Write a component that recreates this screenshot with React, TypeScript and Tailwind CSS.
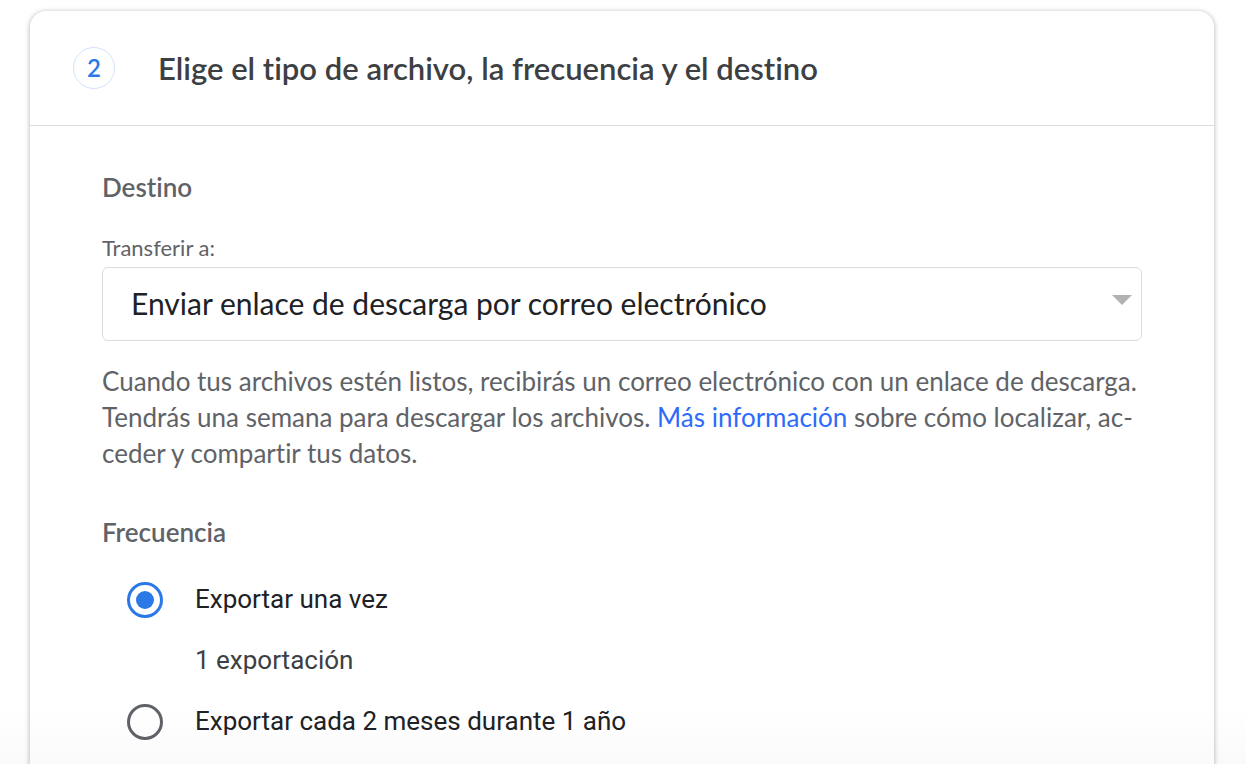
import { useState } from "react";

const frequencies = [
  { id: "once", label: "Exportar una vez", detail: "1 exportación" },
  { id: "recurring", label: "Exportar cada 2 meses durante 1 año", detail: "" },
];

function StepHeader() {
  return (
    <header className="flex h-[115px] items-center gap-[43px] border-b border-[#dadce0] px-[43px]">
      <span className="flex size-[42px] shrink-0 items-center justify-center rounded-full border border-[#d2e3fc] text-2xl font-semibold text-[#2a79e6]">
        2
      </span>
      <h2 className="text-[31px] leading-9 font-semibold text-[#3c4043]">
        Elige el tipo de archivo, la frecuencia y el destino
      </h2>
    </header>
  );
}

function Destination() {
  return (
    <section>
      <h3 className="text-[26px] leading-8 font-semibold">Destino</h3>
      <label htmlFor="transfer" className="mt-[29px] block text-[22px] leading-8">
        Transferir a:
      </label>
      <div className="relative mt-[3px]">
        <select
          id="transfer"
          className="block h-[74px] w-full appearance-none rounded-md border border-[#dadce0] bg-white pr-12 pb-0.5 pl-7 text-[30px] text-[#202124]"
        >
          <option>Enviar enlace de descarga por correo electrónico</option>
        </select>
        <svg
          aria-hidden="true"
          viewBox="0 0 20 10"
          className="pointer-events-none absolute top-7 right-[10px] h-[10px] w-5 fill-[#b2b2b2]"
        >
          <path d="M0 0h20L10 10z" />
        </svg>
      </div>
      <p className="mt-[22px] text-[26px] leading-9">
        Cuando tus archivos estén listos, recibirás un correo electrónico con un enlace de descarga.
        Tendrás una semana para descargar los archivos.{" "}
        <a href="#informacion" className="text-[#2f6bfa]">
          Más información
        </a>{" "}
        sobre cómo localizar, ac&shy;ceder y compartir tus datos.
      </p>
    </section>
  );
}

function Frequency() {
  const [selected, setSelected] = useState("once");
  return (
    <fieldset className="mt-[45px]">
      <legend className="text-[26px] leading-8 font-semibold">Frecuencia</legend>
      <div className="mt-[21px] pl-[25px] font-['Roboto',sans-serif] text-[26px] text-[#202124]">
        {frequencies.map((option) => (
          <div key={option.id}>
            <label htmlFor={option.id} className="flex h-[61px] items-center gap-8">
              <span className="grid size-9 shrink-0 place-items-center">
                <input
                  id={option.id}
                  type="radio"
                  name="frequency"
                  checked={selected === option.id}
                  onChange={() => setSelected(option.id)}
                  className="peer col-start-1 row-start-1 size-9 appearance-none rounded-full border-3 border-[#5f6368] checked:border-[#2a79e6]"
                />
                <span className="pointer-events-none col-start-1 row-start-1 size-[18px] rounded-full peer-checked:bg-[#2a79e6]" />
              </span>
              {option.label}
            </label>
            {option.detail && (
              <p className="flex h-[61px] items-center pl-[68px] text-[#3c4043]">{option.detail}</p>
            )}
          </div>
        ))}
      </div>
    </fieldset>
  );
}

export default function App() {
  return (
    <main
      lang="es"
      className="relative flex min-h-screen flex-col bg-white pt-[11px] pr-8 pl-[30px] font-['Lato',sans-serif] text-[#5f6368] [font-variant-ligatures:none]"
    >
      <article className="flex-1 rounded-t-2xl bg-white shadow-[0_1px_4px_1px_rgba(60,64,67,0.3)]">
        <StepHeader />
        <div className="px-[72px] pt-[45px]">
          <Destination />
          <Frequency />
        </div>
      </article>
      <div className="pointer-events-none absolute inset-x-0 bottom-0 h-14 bg-linear-to-t from-black/2 to-transparent" />
    </main>
  );
}
